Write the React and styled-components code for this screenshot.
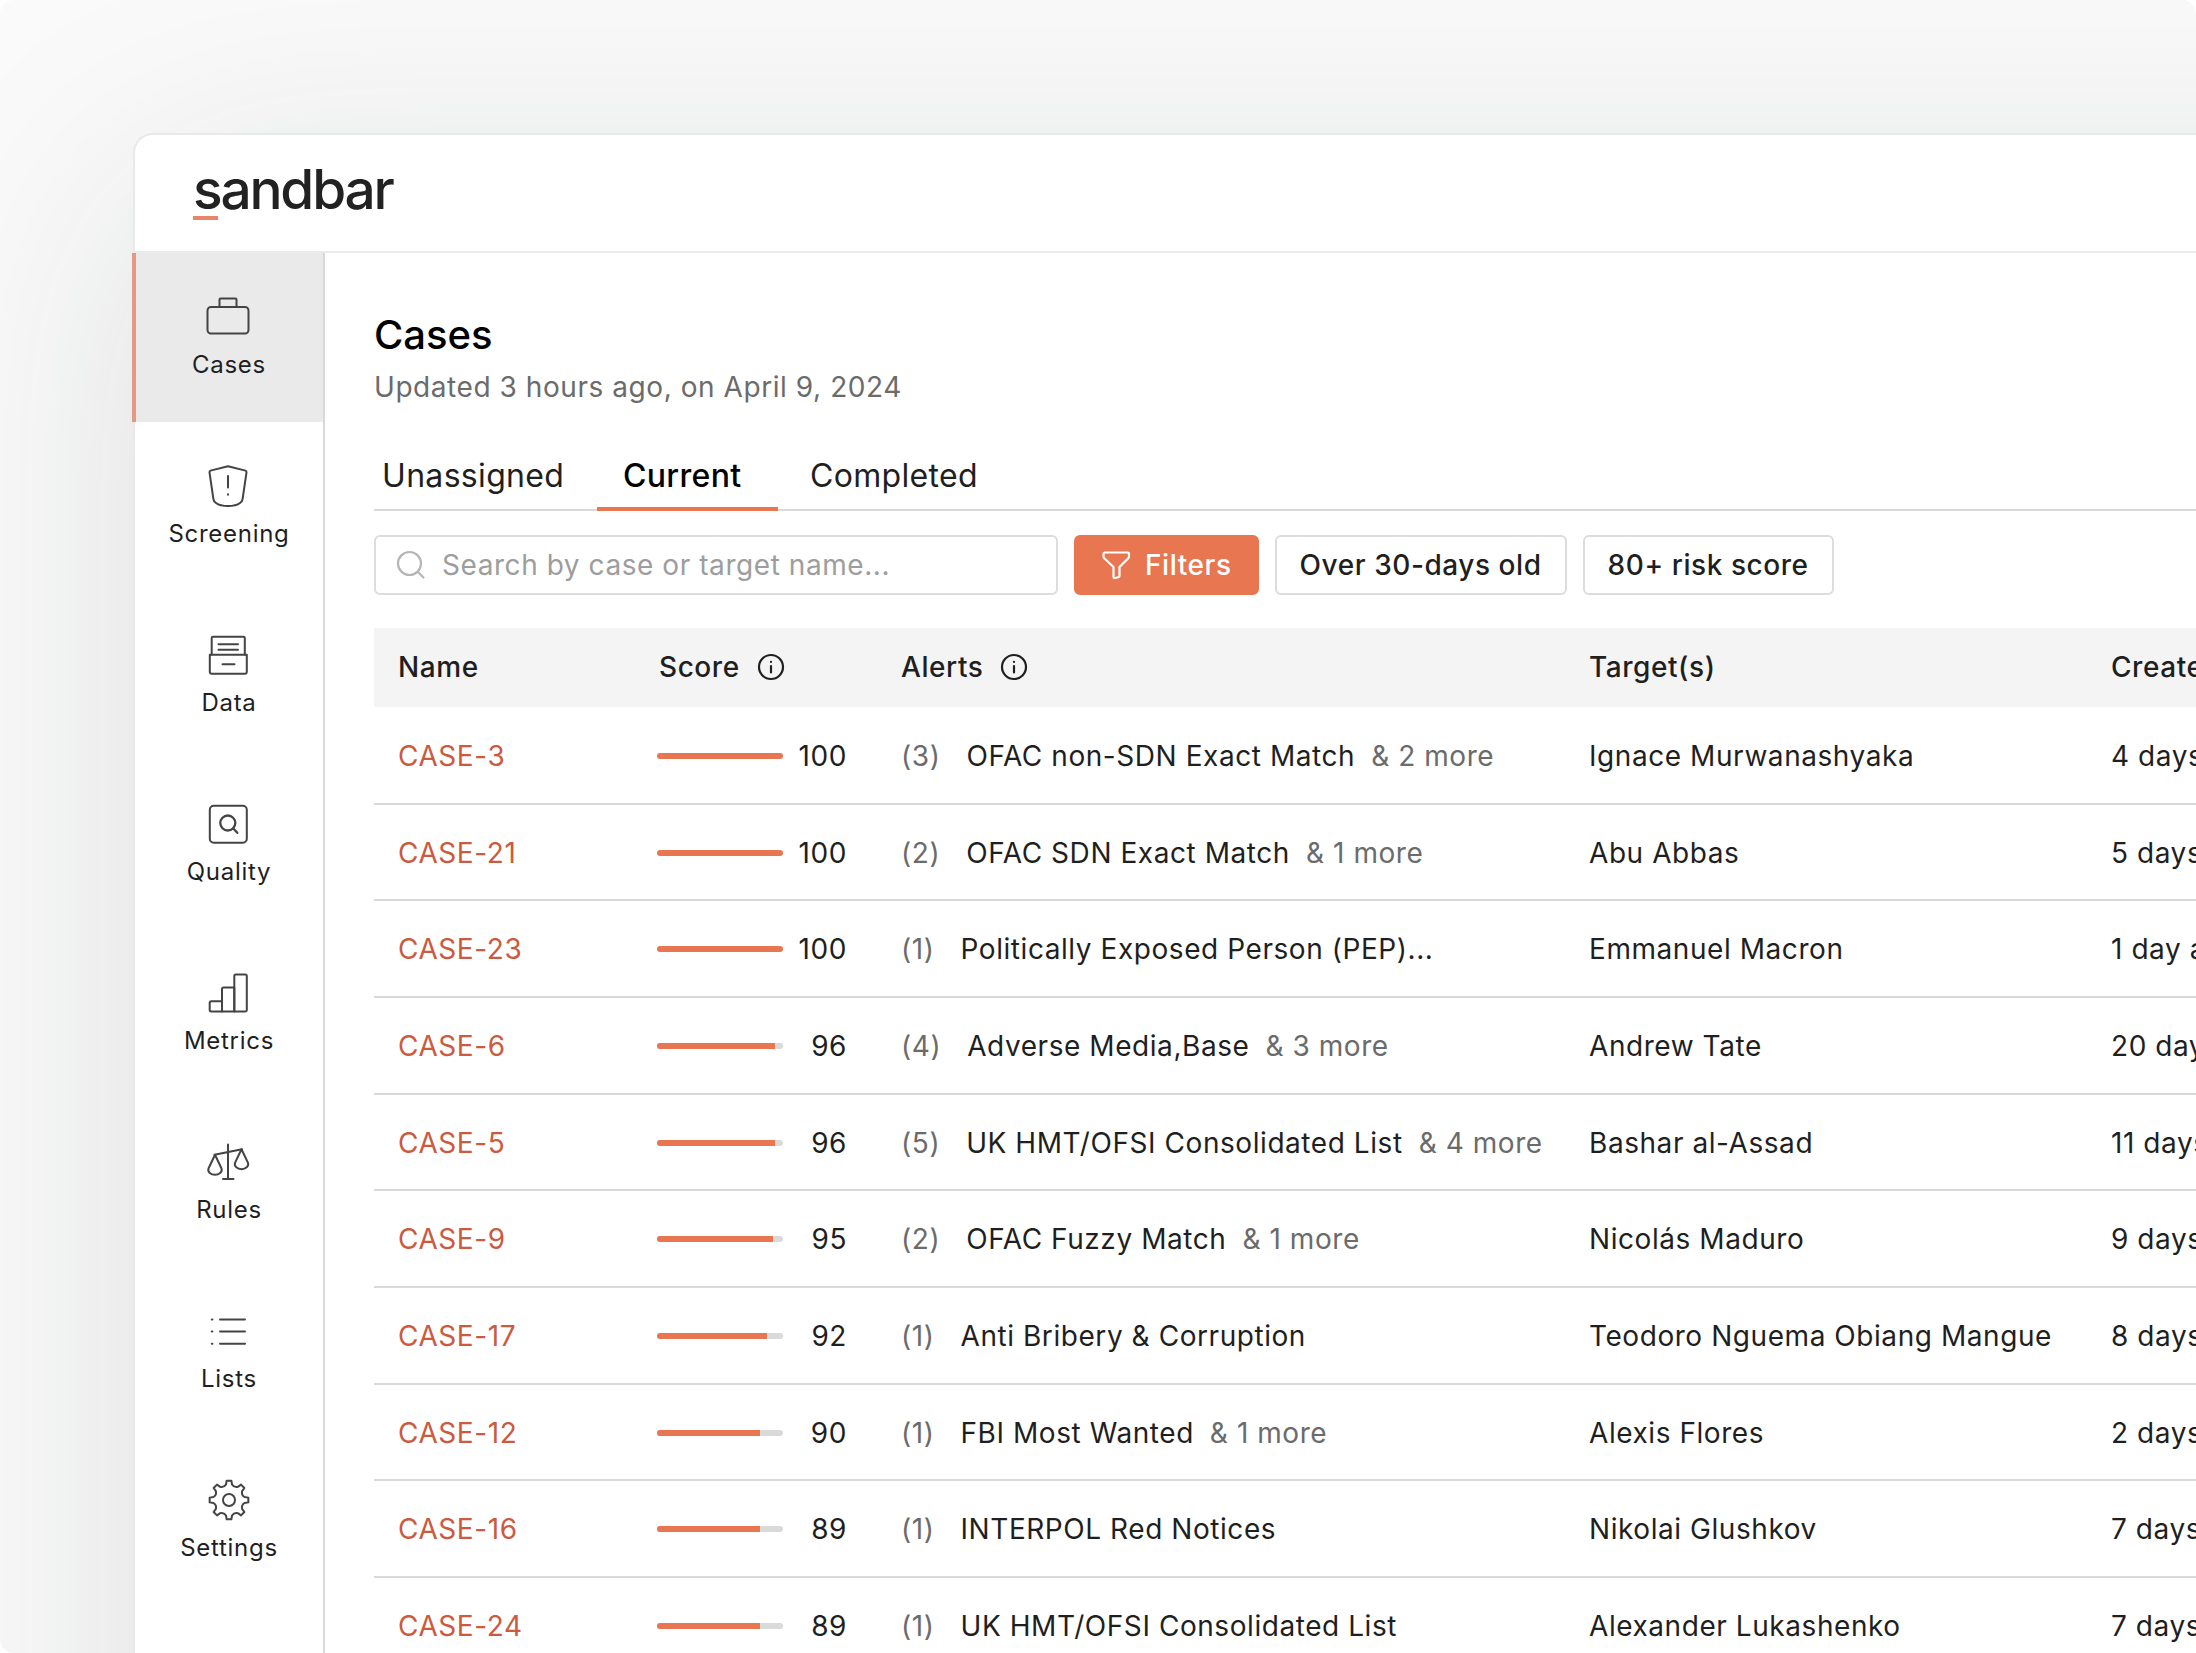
import React from "react";
import styled, { createGlobalStyle, css } from "styled-components";

const accent = "#e77651";
const line = "#d9d9d9";
const ink = "#1f1f1f";
const muted = "#6b6b6b";

const GlobalStyle = createGlobalStyle`
  *, *::before, *::after { box-sizing: border-box; }
  html, body, #root { height: 100%; }
  body {
    margin: 0;
    overflow: hidden;
    background: #ffffff;
    color: ${ink};
    font-family: Inter, "Liberation Sans", sans-serif;
    font-size: 28px;
    line-height: 36px;
  }
  button, input { font: inherit; color: inherit; letter-spacing: inherit; }
`;

const Backdrop = styled.div`
  display: flex;
  height: 100%;
  padding: 133px 0 0 133px;
  overflow: hidden;
  border-radius: 14px;
  background: #fafafa;
`;

const Window = styled.div`
  flex: 1;
  min-width: 0;
  display: flex;
  flex-direction: column;
  margin: 0 -320px -320px 0;
  border: 2px solid #e9e9e9;
  border-width: 2px 0 0 2px;
  border-radius: 20px 0 0 0;
  background: #ffffff;
  box-shadow: 0 60px 280px rgba(20, 36, 32, 0.13);
`;

const TopBar = styled.header`
  display: flex;
  align-items: flex-start;
  height: 118px;
  padding: 28px 58px 0;
  border-bottom: 2px solid #ebebeb;
`;

const Logo = styled.a`
  display: flex;
  flex-direction: column;
  color: #222222;
  text-decoration: none;
  font-size: 55px;
  font-weight: 500;
  line-height: 53px;
  letter-spacing: -0.04em;

  &::after {
    content: "";
    width: 25px;
    height: 4px;
    background: #ea8468;
  }
`;

const Body = styled.div`
  flex: 1;
  display: flex;
  min-height: 0;
`;

const Sidebar = styled.nav`
  flex: 0 0 190px;
  border-right: 2px solid ${line};
`;

const NavItem = styled.a`
  position: relative;
  display: flex;
  flex-direction: column;
  align-items: center;
  gap: 11px;
  height: 169px;
  padding-top: 42px;
  color: ${ink};
  font-size: 24px;
  line-height: 30px;
  letter-spacing: 0.03em;
  text-decoration: none;

  ${(p) =>
    p.$active &&
    css`
      background: #eaeaea;
      &::before {
        content: "";
        position: absolute;
        top: 0;
        bottom: 0;
        left: -3px;
        width: 4px;
        background: #e39a85;
      }
    `}
`;

const NavGlyph = styled.svg`
  width: 44px;
  height: 44px;
  overflow: visible;
  fill: none;
  stroke: #444444;
  stroke-width: 2;
  stroke-linecap: round;
  stroke-linejoin: round;
`;

const Main = styled.main`
  flex: 1;
  min-width: 0;
  padding: 56px 0 0 49px;
  letter-spacing: 0.02em;
`;

const Title = styled.h1`
  margin: 0;
  color: #000000;
  font-size: 40px;
  font-weight: 500;
  line-height: 52px;
  letter-spacing: 0;
`;

const Updated = styled.p`
  margin: 8px 0 0;
  color: ${muted};
`;

const Tabs = styled.div`
  display: flex;
  height: 76px;
  margin-top: 30px;
  border-bottom: 2px solid ${line};
`;

const Tab = styled.button`
  width: ${(p) => p.$width}px;
  height: 76px;
  padding: 9px 0 0 ${(p) => p.$start}px;
  border: 0;
  border-bottom: 4px solid ${(p) => (p.$active ? accent : "transparent")};
  background: none;
  color: ${(p) => (p.$active ? "#000000" : ink)};
  font-size: 32px;
  font-weight: ${(p) => (p.$active ? 500 : 400)};
  line-height: 40px;
  letter-spacing: 0.01em;
  text-align: left;
  white-space: nowrap;
`;

const Toolbar = styled.div`
  display: flex;
  gap: 16px;
  margin: 24px 0 33px;
`;

const SearchBox = styled.label`
  display: flex;
  align-items: center;
  gap: 16px;
  width: 684px;
  height: 60px;
  padding: 0 20px 1px;
  border: 2px solid #dcdcdc;
  border-radius: 6px;
`;

const SearchInput = styled.input`
  flex: 1;
  min-width: 0;
  padding: 0;
  border: 0;
  outline: 0;
  background: none;

  &::placeholder {
    color: #9d9d9d;
    opacity: 1;
  }
`;

const ToolIcon = styled.svg`
  flex: none;
  width: 30px;
  height: 30px;
  fill: none;
  stroke: ${(p) => p.$color};
  stroke-width: 2.2;
  stroke-linecap: round;
  stroke-linejoin: round;
`;

const ToolButton = styled.button`
  display: flex;
  align-items: center;
  gap: 14px;
  height: 60px;
  padding: 0 ${(p) => (p.$primary ? 25 : 23)}px 1px;
  border: 2px solid ${(p) => (p.$primary ? accent : "#dcdcdc")};
  border-radius: 6px;
  background: ${(p) => (p.$primary ? accent : "#ffffff")};
  color: ${(p) => (p.$primary ? "#ffffff" : ink)};
  font-weight: 500;
  white-space: nowrap;
`;

const CaseTable = styled.table`
  width: 100%;
  table-layout: fixed;
  border-collapse: collapse;
  white-space: nowrap;
`;

const Col = styled.col`
  width: ${(p) => p.$width}px;
`;

const HeadCell = styled.th`
  height: 79px;
  padding: 0 0 2px 22px;
  background: #f4f4f4;
  font-weight: 500;
  text-align: left;

  &:nth-child(-n + 2) {
    padding-left: 24px;
  }
`;

const HeadLabel = styled.span`
  display: flex;
  align-items: center;
  gap: 17px;
`;

const InfoIcon = styled.svg`
  width: 28px;
  height: 28px;
  fill: none;
  stroke: ${ink};
  stroke-width: 2.2;
  stroke-linecap: round;
`;

const Row = styled.tr`
  height: 97px;
  border-bottom: 2px solid ${line};

  &:nth-child(3n + 2) {
    height: 96px;
  }
`;

const Cell = styled.td`
  padding: 1px 0 0 22px;

  &:first-child {
    padding-left: 24px;
  }
`;

const CaseLink = styled.a`
  color: #cb5a3f;
  text-decoration: none;
`;

const Score = styled.div`
  display: flex;
  align-items: center;
  width: 190px;
`;

const Track = styled.div`
  width: 126px;
  height: 6px;
  border-radius: 3px;
  overflow: hidden;
  background: #dadada;
`;

const Fill = styled.div`
  height: 100%;
  background: ${accent};
`;

const ScoreValue = styled.span`
  flex: 1;
  text-align: right;
`;

const Alert = styled.div`
  display: flex;
  gap: 26px;
`;

const AlertName = styled.span`
  display: flex;
  gap: 16px;
`;

const Quiet = styled.span`
  color: ${muted};
`;

function gearPath(cx, cy) {
  const at = (radius, degrees) => {
    const a = ((degrees - 90) * Math.PI) / 180;
    return `${(cx + radius * Math.cos(a)).toFixed(2)} ${(cy + radius * Math.sin(a)).toFixed(2)}`;
  };
  let d = `M${at(19.5, -7)}`;
  for (let tooth = 0; tooth < 8; tooth += 1) {
    const m = tooth * 45;
    d += `L${at(19.5, m + 7)}L${at(15.8, m + 11)}Q${at(13.2, m + 22.5)} ${at(15.8, m + 34)}L${at(19.5, m + 38)}`;
  }
  return `${d}Z`;
}

const glyphs = {
  Cases: (
    <>
      <rect x="1.5" y="12" width="41" height="26.5" rx="3.5" />
      <path d="M13.5 12V4.5a1 1 0 0 1 1-1h15a1 1 0 0 1 1 1V12" />
    </>
  ),
  Screening: (
    <>
      <path d="M22 2.3 39.5 6.6q1.2.4 1 1.8L36.6 35q-.4 2.600-2.600 4-4 3-12 3t-12-3q-2.200-1.400-2.600-4L3.500 8.400q-.2-1.400 1-1.800Z" />
      <path d="M22 12v11.500M22 30.200v.6" />
    </>
  ),
  Data: (
    <>
      <path d="M5.700 21.500V5a1.300 1.300 0 0 1 1.300-1.300h30.500A1.300 1.300 0 0 1 38.800 5v16.500" />
      <path d="M3.800 21.800h37V39a1.800 1.800 0 0 1-1.800 1.800H5.600A1.800 1.800 0 0 1 3.800 39Z" />
      <path d="M12.500 11.300h19.500M12.500 16.700h19.500M16.500 31.200h12" />
    </>
  ),
  Quality: (
    <>
      <rect x="3.800" y="3.800" width="37" height="37" rx="4" />
      <circle cx="21.800" cy="21" r="7.500" strokeWidth="2.300" />
      <path d="m27.300 26.500 4 4.300" strokeWidth="2.300" />
    </>
  ),
  Metrics: (
    <>
      <path d="M16 40.500H5.200a1.500 1.500 0 0 1-1.500-1.500v-7.200a1.500 1.500 0 0 1 1.500-1.500H16" />
      <path d="M16 40.500V18a1.500 1.500 0 0 1 1.500-1.500h10.800v24Z" />
      <path d="M28.300 40.500V5a1.500 1.500 0 0 1 1.500-1.500h9.500a1.500 1.500 0 0 1 1.500 1.500v34a1.500 1.500 0 0 1-1.500 1.500Z" />
    </>
  ),
  Rules: (
    <>
      <path d="M22 4.500V39M17 39h10.500M8.500 14.800 36 9.200" />
      <path d="M9 14.800 2.500 28.500c-1.200 3.500 2.500 6.300 6.500 6.300s7.700-2.800 6.500-6.300L9 14.800Z" />
      <path d="M35.500 9.200 29 22.900c-1.200 3.500 2.500 6.300 6.500 6.300s7.700-2.800 6.500-6.300L35.500 9.200Z" />
    </>
  ),
  Lists: (
    <path d="M14 10.500h25M14 22.500h25M14 34.700h25M5.800 10.500h.6M5.800 22.500h.6M5.800 34.700h.6" />
  ),
  Settings: (
    <>
      <path d={gearPath(23, 22)} />
      <circle cx="23" cy="22" r="6" />
    </>
  ),
};

const sections = ["Cases", "Screening", "Data", "Quality", "Metrics", "Rules", "Lists", "Settings"];

const cases = [
  { id: "CASE-3", score: 100, bar: 100, count: 3, alert: "OFAC non-SDN Exact Match", more: 2, target: "Ignace Murwanashyaka", created: "4 days ago" },
  { id: "CASE-21", score: 100, bar: 100, count: 2, alert: "OFAC SDN Exact Match", more: 1, target: "Abu Abbas", created: "5 days ago" },
  { id: "CASE-23", score: 100, bar: 100, count: 1, alert: "Politically Exposed Person (PEP)...", target: "Emmanuel Macron", created: "1 day ago" },
  { id: "CASE-6", score: 96, bar: 94, count: 4, alert: "Adverse Media,Base", more: 3, target: "Andrew Tate", created: "20 days ago" },
  { id: "CASE-5", score: 96, bar: 94, count: 5, alert: "UK HMT/OFSI Consolidated List", more: 4, target: "Bashar al-Assad", created: "11 days ago" },
  { id: "CASE-9", score: 95, bar: 92, count: 2, alert: "OFAC Fuzzy Match", more: 1, target: "Nicolás Maduro", created: "9 days ago" },
  { id: "CASE-17", score: 92, bar: 87, count: 1, alert: "Anti Bribery & Corruption", target: "Teodoro Nguema Obiang Mangue", created: "8 days ago" },
  { id: "CASE-12", score: 90, bar: 82, count: 1, alert: "FBI Most Wanted", more: 1, target: "Alexis Flores", created: "2 days ago" },
  { id: "CASE-16", score: 89, bar: 82, count: 1, alert: "INTERPOL Red Notices", target: "Nikolai Glushkov", created: "7 days ago" },
  { id: "CASE-24", score: 89, bar: 82, count: 1, alert: "UK HMT/OFSI Consolidated List", target: "Alexander Lukashenko", created: "7 days ago" },
];

function Info() {
  return (
    <InfoIcon viewBox="0 0 28 28" aria-hidden="true">
      <circle cx="14" cy="14" r="12" />
      <path d="M14 13v6.500M14 8.800v.2" />
    </InfoIcon>
  );
}

export default function App() {
  return (
    <>
      <GlobalStyle />
      <Backdrop>
        <Window>
          <TopBar>
            <Logo href="#home">sandbar</Logo>
          </TopBar>
          <Body>
            <Sidebar aria-label="Sections">
              {sections.map((name, index) => (
                <NavItem key={name} href={`#${name.toLowerCase()}`} $active={index === 0}>
                  <NavGlyph viewBox="1 0 44 44" aria-hidden="true">
                    {glyphs[name]}
                  </NavGlyph>
                  {name}
                </NavItem>
              ))}
            </Sidebar>
            <Main>
              <Title>Cases</Title>
              <Updated>Updated 3 hours ago, on April 9, 2024</Updated>
              <Tabs role="tablist">
                <Tab role="tab" aria-selected="false" $width={223} $start={8}>Unassigned</Tab>
                <Tab role="tab" aria-selected="true" $active $width={181} $start={26}>Current</Tab>
                <Tab role="tab" aria-selected="false" $width={233} $start={32}>Completed</Tab>
              </Tabs>
              <Toolbar>
                <SearchBox>
                  <ToolIcon viewBox="0 0 30 30" $color="#b5b5b5" aria-hidden="true">
                    <circle cx="13.500" cy="13.500" r="11.500" />
                    <path d="m22 22 5.500 5.500" />
                  </ToolIcon>
                  <SearchInput
                    type="text"
                    aria-label="Search by case or target name"
                    placeholder="Search by case or target name..."
                  />
                </SearchBox>
                <ToolButton type="button" $primary>
                  <ToolIcon viewBox="0 0 30 30" $color="#ffffff" aria-hidden="true">
                    <path d="M3.500 2.500h23q1.500 0 1.500 1.500v2.500q0 1-.7 1.800L18.500 17v9q0 1-1 1.200l-3.500.8q-1.500.2-1.500-1.200V17L3.200 8.300Q2.500 7.500 2.500 6.500V4q0-1.500 1-1.500Z" />
                  </ToolIcon>
                  Filters
                </ToolButton>
                <ToolButton type="button">Over 30-days old</ToolButton>
                <ToolButton type="button">80+ risk score</ToolButton>
              </Toolbar>
              <CaseTable>
                <colgroup>
                  <Col $width={261} />
                  <Col $width={244} />
                  <Col $width={688} />
                  <Col $width={522} />
                  <col />
                </colgroup>
                <thead>
                  <tr>
                    <HeadCell scope="col">Name</HeadCell>
                    <HeadCell scope="col"><HeadLabel>Score <Info /></HeadLabel></HeadCell>
                    <HeadCell scope="col"><HeadLabel>Alerts <Info /></HeadLabel></HeadCell>
                    <HeadCell scope="col">Target(s)</HeadCell>
                    <HeadCell scope="col">Created</HeadCell>
                  </tr>
                </thead>
                <tbody>
                  {cases.map((item) => (
                    <Row key={item.id}>
                      <Cell><CaseLink href={`#${item.id}`}>{item.id}</CaseLink></Cell>
                      <Cell>
                        <Score>
                          <Track><Fill style={{ width: `${item.bar}%` }} /></Track>
                          <ScoreValue>{item.score}</ScoreValue>
                        </Score>
                      </Cell>
                      <Cell>
                        <Alert>
                          <Quiet>({item.count})</Quiet>
                          <AlertName>
                            {item.alert}
                            {item.more && <Quiet>&amp; {item.more} more</Quiet>}
                          </AlertName>
                        </Alert>
                      </Cell>
                      <Cell>{item.target}</Cell>
                      <Cell>{item.created}</Cell>
                    </Row>
                  ))}
                </tbody>
              </CaseTable>
            </Main>
          </Body>
        </Window>
      </Backdrop>
    </>
  );
}
